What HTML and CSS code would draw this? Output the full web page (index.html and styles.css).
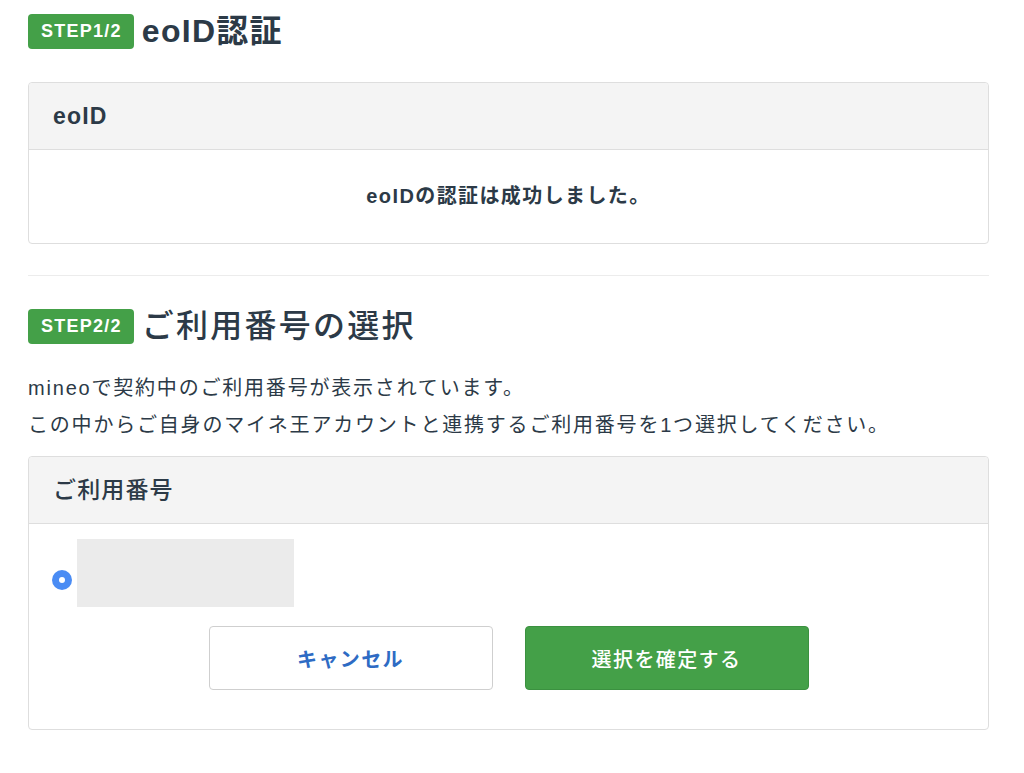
FILE: index.html
```html
<!DOCTYPE html>
<html lang="ja">
<head>
  <meta charset="UTF-8">
  <meta name="viewport" content="width=device-width, initial-scale=1.0">
  <title>eoID認証 — ご利用番号の選択</title>
  <link rel="stylesheet" href="styles.css">
</head>
<body>
  <div class="container">
    <h2 class="step-title">
      <span class="badge">STEP1/2</span>
      <span class="step-text bold">eoID認証</span>
    </h2>

    <div class="card">
      <div class="card-header bold">eoID</div>
      <div class="card-body center">
        <p class="success">eoIDの認証は成功しました。</p>
      </div>
    </div>

    <hr class="divider">

    <h2 class="step-title">
      <span class="badge">STEP2/2</span>
      <span class="step-text">ご利用番号の選択</span>
    </h2>

    <p class="lead">
      mineoで契約中のご利用番号が表示されています。<br>
      この中からご自身のマイネ王アカウントと連携するご利用番号を1つ選択してください。
    </p>

    <div class="card card-tight">
      <div class="card-header">ご利用番号</div>
      <div class="card-body">
        <label class="option">
          <span class="radio checked"></span>
          <span class="masked"></span>
        </label>

        <div class="actions">
          <button class="btn btn-cancel">キャンセル</button>
          <button class="btn btn-primary">選択を確定する</button>
        </div>
      </div>
    </div>
  </div>
</body>
</html>
```

FILE: styles.css
```css
body {
  background-color: #fff;
  color: #2c3a47;
  font-family: "Liberation Sans", "Noto Sans CJK JP", sans-serif;
  font-size: 20px;
  letter-spacing: 0.07em;
  margin: 0;
  padding: 0;
}
.container {
  padding: 14px 35px 40px 28px;
}
.bold {
  font-weight: bold;
}
.center {
  text-align: center;
}

.step-title {
  display: flex;
  align-items: center;
  gap: 8px;
  margin: 0;
  height: 35px;
  font-weight: normal;
}
.badge {
  display: inline-block;
  background-color: #44a048;
  color: #fff;
  font-size: 18px;
  font-weight: bold;
  line-height: 35px;
  height: 35px;
  padding: 0 12px 0 13px;
  border-radius: 4px;
  letter-spacing: 0.07em;
}
.step-text {
  font-size: 32px;
  line-height: 35px;
  letter-spacing: 0.07em;
  font-weight: 500;
}
.step-text.bold {
  font-weight: bold;
  letter-spacing: 0.04em;
}

.card {
  border: 1px solid #dedede;
  border-radius: 4px;
  margin-top: 33px;
}
.card-tight {
  margin-top: 12px;
}
.card-header {
  background-color: #f4f4f4;
  border-bottom: 1px solid #dedede;
  border-radius: 4px 4px 0 0;
  height: 66px;
  line-height: 66px;
  padding: 0 24px;
  font-size: 23px;
  letter-spacing: 0.05em;
  font-weight: 500;
}
.card-header.bold {
  font-weight: bold;
}
.card-body {
  padding: 0 24px;
}
.success {
  margin: 0;
  font-weight: bold;
  line-height: 93px;
}

.divider {
  border: none;
  border-top: 1px solid #ececec;
  margin: 31px 0 33px;
}

.lead {
  margin: 26px 0 0;
  line-height: 37px;
  font-size: 20px;
  letter-spacing: 0.09em;
}

.option {
  display: flex;
  align-items: flex-end;
  gap: 5px;
  padding-top: 15px;
  margin-left: -1px;
}
.radio {
  width: 20px;
  height: 20px;
  border-radius: 50%;
  background-color: #4a8cf4;
  position: relative;
  margin-bottom: 17px;
}
.radio.checked::after {
  content: "";
  position: absolute;
  left: 7px;
  top: 7px;
  width: 6px;
  height: 6px;
  border-radius: 50%;
  background-color: #fff;
}
.masked {
  width: 217px;
  height: 68px;
  background-color: #ebebeb;
}

.actions {
  display: flex;
  justify-content: center;
  gap: 32px;
  padding: 19px 0 39px;
}
.btn {
  width: 284px;
  height: 64px;
  border-radius: 4px;
  font-family: inherit;
  font-size: 20px;
  letter-spacing: 0.07em;
  font-weight: bold;
  cursor: pointer;
}
.btn-cancel {
  background: #fff;
  border: 1px solid #cfcfcf;
  color: #2e6bc4;
}
.btn-primary {
  background: #44a048;
  border: 1px solid #3b9140;
  color: #fff;
  font-weight: 500;
}
```
